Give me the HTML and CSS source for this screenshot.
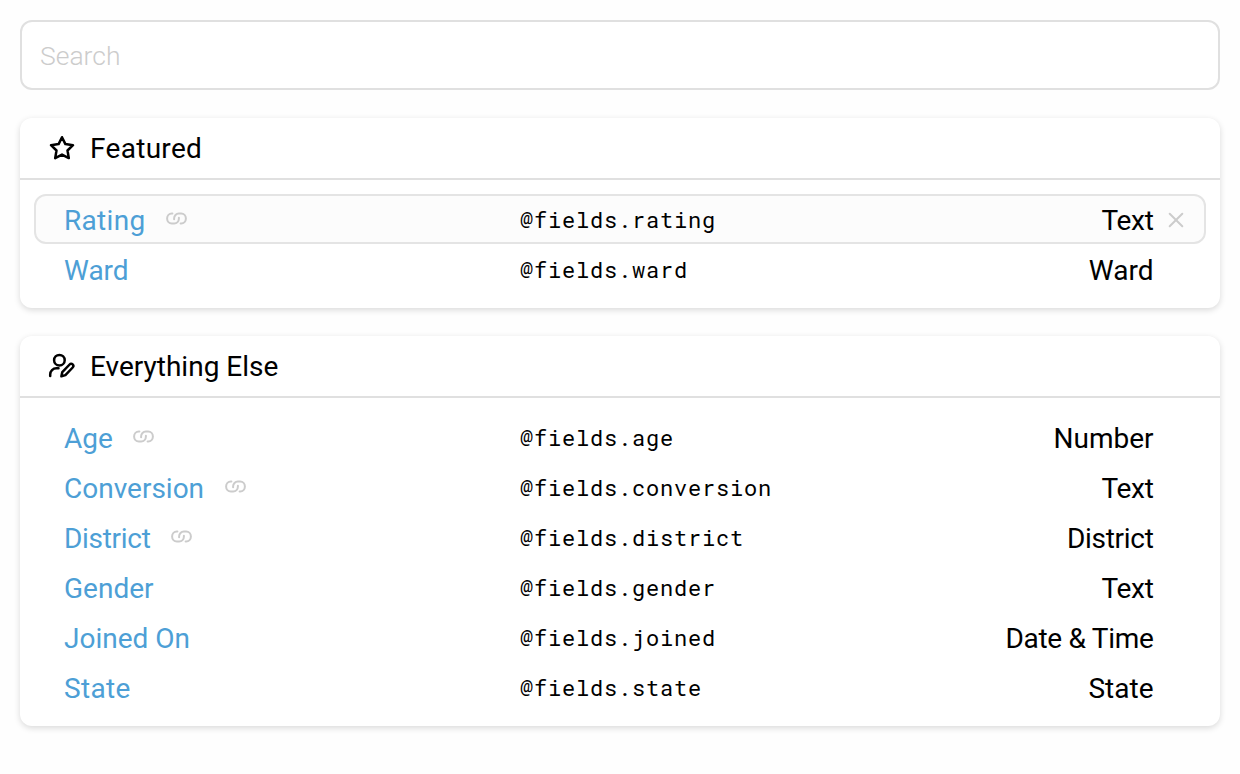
FILE: index.html
```html
<!DOCTYPE html>
<html lang="en">
<head>
<meta charset="utf-8">
<title>Fields</title>
<link rel="stylesheet" href="styles.css">
</head>
<body>
<svg class="defs" aria-hidden="true">
  <symbol id="link" viewBox="0 0 21 13">
    <path d="M6.4 1.6h-.6a4.7 4.9 0 0 0 0 9.8h2.4a4.7 4.9 0 0 0 4.7-4.9v-.7M14.6 11.4h.6a4.7 4.9 0 0 0 0-9.8h-2.4a4.7 4.9 0 0 0-4.7 4.9v.7"/>
  </symbol>
</svg>
<main class="page">
  <input class="search" type="text" placeholder="Search" aria-label="Search">

  <section class="card">
    <header class="card-header">
      <svg class="header-icon" viewBox="0 0 28 28"><path d="M14 3.2l3.4 6.9 7.6 1.1-5.5 5.3 1.3 7.6-6.8-3.5-6.8 3.5 1.3-7.6L3 11.2l7.6-1.1z"/></svg>
      <h2 class="card-title loose">Featured</h2>
    </header>
    <div class="rows">
      <div class="row active">
        <div class="name"><a class="loose">Rating</a><svg class="link-icon"><use href="#link"/></svg></div>
        <code class="path">@fields.rating</code><span class="type tight">Text</span>
        <svg class="close" viewBox="0 0 16 16"><path d="M1.7 1.7l12.6 12.6M14.3 1.7L1.7 14.3"/></svg>
      </div>
      <div class="row"><div class="name"><a>Ward</a></div><code class="path">@fields.ward</code><span class="type">Ward</span></div>
    </div>
  </section>

  <section class="card">
    <header class="card-header">
      <svg class="header-icon" viewBox="0 0 28 28"><circle cx="11.4" cy="8.2" r="5.3"/><path d="M2.2 24v-1.6a6.2 6.2 0 0 1 6.2-6.2h2.1M13.4 24.3l.9-4.2 7.3-7.6a2.15 2.15 0 0 1 3.1 3l-7.3 7.6z"/></svg>
      <h2 class="card-title">Everything Else</h2>
    </header>
    <div class="rows">
      <div class="row"><div class="name"><a>Age</a><svg class="link-icon"><use href="#link"/></svg></div><code class="path">@fields.age</code><span class="type">Number</span></div>
      <div class="row"><div class="name"><a>Conversion</a><svg class="link-icon"><use href="#link"/></svg></div><code class="path">@fields.conversion</code><span class="type tight">Text</span></div>
      <div class="row"><div class="name"><a class="tight">District</a><svg class="link-icon"><use href="#link"/></svg></div><code class="path">@fields.district</code><span class="type tight">District</span></div>
      <div class="row"><div class="name"><a>Gender</a></div><code class="path">@fields.gender</code><span class="type tight">Text</span></div>
      <div class="row"><div class="name"><a>Joined On</a></div><code class="path">@fields.joined</code><span class="type tight">Date &amp; Time</span></div>
      <div class="row"><div class="name"><a class="loose">State</a></div><code class="path">@fields.state</code><span class="type">State</span></div>
    </div>
  </section>
</main>
</body>
</html>
```

FILE: styles.css
```css
* { box-sizing: border-box; }
body {
  margin: 0;
  background: #fefefe;
  color: #000;
  font-family: Roboto, sans-serif;
  font-size: 28px;
}
.defs { display: none; }
.page {
  display: flex;
  flex-direction: column;
  gap: 28px;
  padding: 20px;
}
.search {
  width: 100%;
  height: 70px;
  padding: 0 18px;
  border: 2px solid #e0e0e0;
  border-radius: 12px;
  background: #fff;
  font: 300 26.5px Roboto, sans-serif;
  outline: none;
}
.search::placeholder { color: #ccc; opacity: 1; }
.card {
  border-radius: 12px;
  background: #fff;
  box-shadow: 0 2px 6px rgba(0, 0, 0, 0.15);
}
.card-header {
  display: flex;
  align-items: center;
  gap: 14px;
  height: 62px;
  padding: 0 28px;
  border-bottom: 2px solid #e0e0e0;
}
.card-title { margin: 0; font-size: 28px; font-weight: 400; }
.loose { letter-spacing: 0.3px; }
.tight { letter-spacing: -0.3px; }
svg {
  flex: none;
  fill: none;
  stroke: currentColor;
  stroke-linecap: round;
  stroke-linejoin: round;
}
.header-icon { width: 28px; height: 28px; stroke-width: 2.5; }
.rows { padding: 14px; }
.row {
  display: grid;
  grid-template-columns: 456px 1fr 300.5px 50.5px;
  align-items: center;
  height: 50px;
  padding-left: 28px;
  border: 2px solid transparent;
  border-radius: 12px;
}
.row.active { border-color: #e4e4e4; background: #fcfcfc; }
.name { display: flex; align-items: center; gap: 20.5px; padding-top: 2px; color: #4d9fd6; }
.link-icon { width: 21px; height: 13px; margin-top: -3px; color: #ccc; stroke-width: 2; }
.path {
  font-family: "Roboto Mono", "DejaVu Sans Mono", monospace;
  font-size: 22px;
  letter-spacing: 0.8px;
}
.type { padding-top: 2px; text-align: right; }
.close { width: 16px; height: 16px; margin: 2px 0 0 14.5px; color: #ccc; stroke-width: 2; }
```
